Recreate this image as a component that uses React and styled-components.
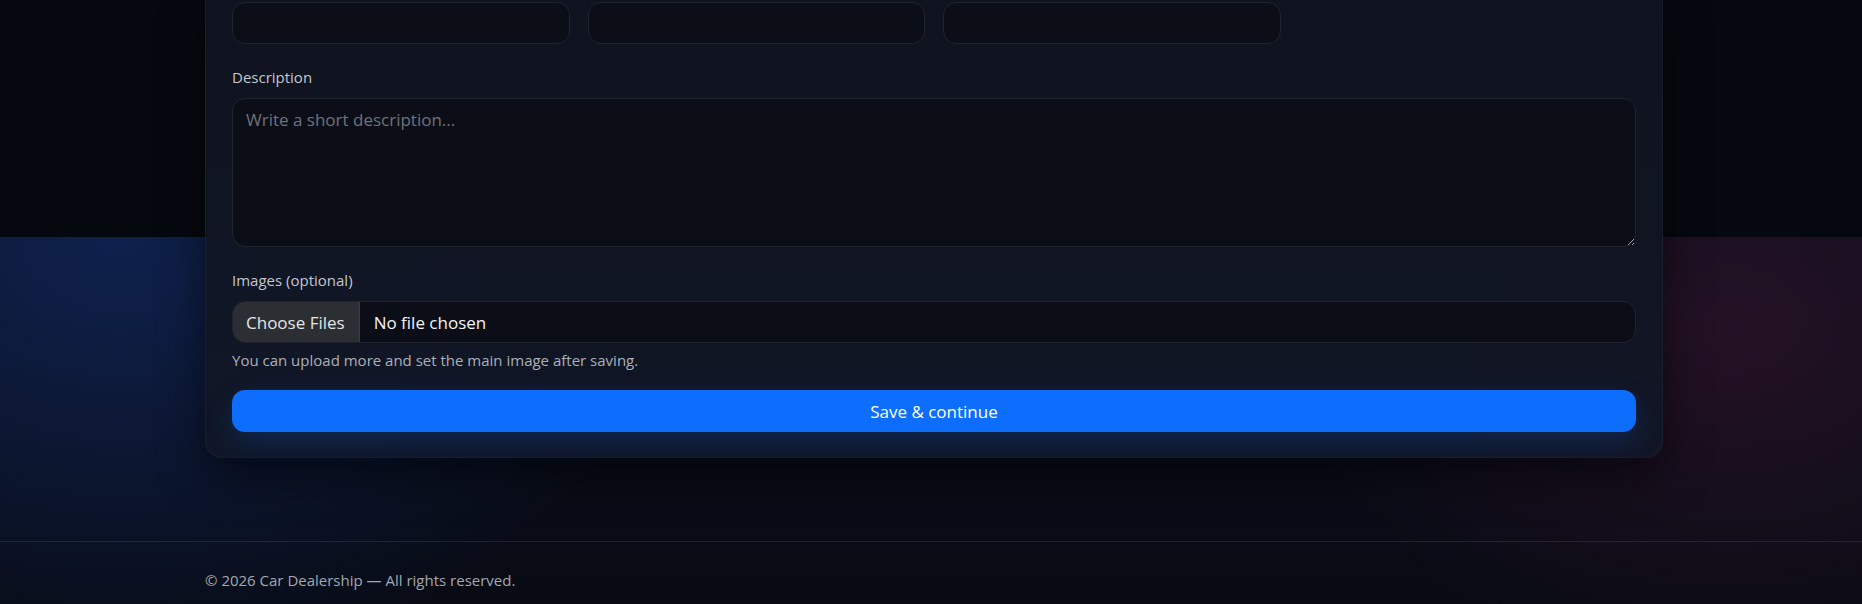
import React from "react";
import styled, { createGlobalStyle } from "styled-components";

const GlobalStyle = createGlobalStyle`
  *, *::before, *::after { box-sizing: border-box; }
  html, body { margin: 0; padding: 0; background: #080b14; }
  body {
    font-family: "Open Sans", "Noto Sans", sans-serif;
    color: #dee2e6;
    -webkit-font-smoothing: antialiased;
  }
`;

const Page = styled.div`
  min-height: 604px;
  padding-left: 6px;
  display: flex;
  flex-direction: column;
  overflow: hidden;
  background:
    linear-gradient(#05080f, #05080f) 0 0 / 100% 237px no-repeat,
    radial-gradient(ellipse 560px 440px at 120px 237px, rgba(16, 40, 96, 0.72), rgba(16, 40, 96, 0) 100%),
    radial-gradient(ellipse 440px 340px at 1730px 330px, rgba(58, 20, 46, 0.55), rgba(58, 20, 46, 0) 100%),
    linear-gradient(180deg, #0a0e1a 237px, #080b14 604px);
`;

const Main = styled.main`
  padding-bottom: 83px;
`;

const Container = styled.div`
  width: 1458px;
  margin: 0 auto;
`;

const Card = styled.section`
  background: linear-gradient(180deg, rgba(16, 20, 32, 0.97), rgba(17, 23, 38, 0.95));
  border: 1px solid rgba(255, 255, 255, 0.035);
  border-top: none;
  border-radius: 0 0 17px 17px;
  padding: 2px 26px 25px;
  box-shadow: 0 18px 44px rgba(0, 0, 0, 0.5);
`;

const FieldGrid = styled.div`
  display: grid;
  grid-template-columns: repeat(4, 1fr);
  gap: 18px;
`;

const inputBase = `
  width: 100%;
  background: #0b0e17;
  border: 1px solid #20242f;
  border-radius: 13px;
  color: #e9ecef;
  font-family: "Open Sans", "Noto Sans", sans-serif;
  font-size: 17px;
  outline: none;
`;

const TextInput = styled.input`
  ${inputBase}
  height: 42px;
  padding: 0 14px;
  display: block;
`;

const Field = styled.div`
  margin-top: 22px;
`;

const Label = styled.label`
  display: block;
  font-size: 15px;
  line-height: 22px;
  color: #c3c7cf;
  margin-bottom: 10px;
`;

const TextArea = styled.textarea`
  ${inputBase}
  display: block;
  height: 149px;
  padding: 8px 13px;
  line-height: 26px;
  resize: vertical;
  color-scheme: dark;
  &::placeholder { color: #6d727c; }
`;

const FileBox = styled.label`
  ${inputBase}
  display: flex;
  align-items: stretch;
  height: 42px;
  overflow: hidden;
  cursor: pointer;
`;

const HiddenFile = styled.input`
  display: none;
`;

const ChooseButton = styled.span`
  display: flex;
  align-items: center;
  padding: 0 14px 0 13px;
  background: #2b2e33;
  color: #e3e5e8;
  border-right: 1px solid #3a3d43;
`;

const FileName = styled.span`
  display: flex;
  align-items: center;
  padding-left: 14px;
  color: #f3f4f6;
`;

const Help = styled.div`
  margin-top: 7px;
  font-size: 15px;
  line-height: 21px;
  color: #abb0b9;
`;

const SubmitButton = styled.button`
  display: block;
  width: 100%;
  height: 42px;
  margin-top: 19px;
  border: none;
  border-radius: 13px;
  background: #0d6efd;
  color: #ffffff;
  font-family: "Open Sans", "Noto Sans", sans-serif;
  font-size: 17px;
  cursor: pointer;
  box-shadow: 0 10px 28px rgba(13, 110, 253, 0.2);
`;

const Footer = styled.footer`
  border-top: 1px solid rgba(255, 255, 255, 0.09);
  margin-left: -6px;
  padding: 27px 0 14px 6px;
`;

const FooterText = styled.p`
  margin: 0;
  font-size: 15px;
  line-height: 22px;
  color: #a2a7b0;
`;

export default function App() {
  return (
    <>
      <GlobalStyle />
      <Page>
        <Main>
          <Container>
            <Card>
              <FieldGrid>
                <TextInput type="text" aria-label="Field 1" />
                <TextInput type="text" aria-label="Field 2" />
                <TextInput type="text" aria-label="Field 3" />
              </FieldGrid>
              <Field>
                <Label htmlFor="desc">Description</Label>
                <TextArea id="desc" placeholder="Write a short description..." />
              </Field>
              <Field>
                <Label as="div">Images (optional)</Label>
                <FileBox>
                  <HiddenFile type="file" multiple />
                  <ChooseButton>Choose Files</ChooseButton>
                  <FileName>No file chosen</FileName>
                </FileBox>
                <Help>You can upload more and set the main image after saving.</Help>
              </Field>
              <SubmitButton type="button">Save &amp; continue</SubmitButton>
            </Card>
          </Container>
        </Main>
        <Footer>
          <Container>
            <FooterText>© 2026 Car Dealership — All rights reserved.</FooterText>
          </Container>
        </Footer>
      </Page>
    </>
  );
}
